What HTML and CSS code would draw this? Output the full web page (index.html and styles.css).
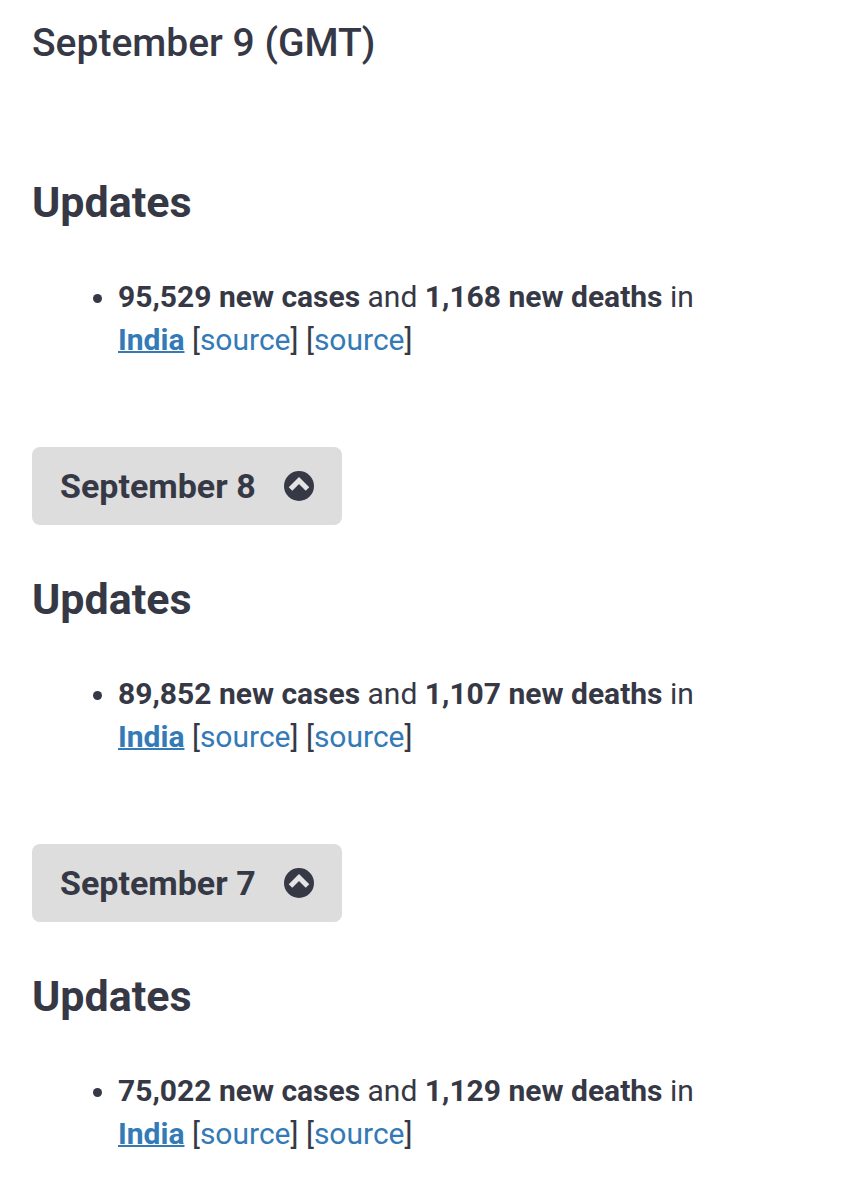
FILE: index.html
```html
<!DOCTYPE html>
<html lang="en">
<head>
<meta charset="utf-8">
<meta name="viewport" content="width=device-width, initial-scale=1">
<title>Updates</title>
<link rel="stylesheet" href="styles.css">
</head>
<body>
<main class="news">
  <section class="day">
    <h3 class="today">September 9 (GMT)</h3>
    <h2 class="heading">Updates</h2>
    <ul class="list">
      <li><strong>95,529 new cases</strong> and <strong>1,168 new deaths</strong> in <a class="country" href="#">India</a> [<a href="#">source</a>] [<a href="#">source</a>]</li>
    </ul>
  </section>
  <section class="day">
    <button class="toggle" type="button" aria-expanded="true">September 8
      <svg class="chevron" viewBox="0 0 30 30" aria-hidden="true"><circle cx="15" cy="15" r="15"/><path d="M6.5 18 15 9.5l8.5 8.5"/></svg>
    </button>
    <h2 class="heading">Updates</h2>
    <ul class="list">
      <li><strong>89,852 new cases</strong> and <strong>1,107 new deaths</strong> in <a class="country" href="#">India</a> [<a href="#">source</a>] [<a href="#">source</a>]</li>
    </ul>
  </section>
  <section class="day">
    <button class="toggle" type="button" aria-expanded="true">September 7
      <svg class="chevron" viewBox="0 0 30 30" aria-hidden="true"><circle cx="15" cy="15" r="15"/><path d="M6.5 18 15 9.5l8.5 8.5"/></svg>
    </button>
    <h2 class="heading">Updates</h2>
    <ul class="list">
      <li><strong>75,022 new cases</strong> and <strong>1,129 new deaths</strong> in <a class="country" href="#">India</a> [<a href="#">source</a>] [<a href="#">source</a>]</li>
    </ul>
  </section>
</main>
</body>
</html>
```
FILE: styles.css
```css
body {
  margin: 0;
  background: #fff;
  color: #363945;
  font-family: Roboto, sans-serif;
  font-size: 30px;
  line-height: 43px;
}

.news {
  padding: 19px 32px 0;
}

.day + .day {
  margin-top: 86px;
}

.today {
  margin: 0 0 111px;
  font-size: 39px;
  font-weight: 500;
  line-height: 48px;
}

.heading {
  margin: 0 0 49px;
  font-size: 43px;
  font-weight: 700;
  line-height: 48px;
}

.list {
  margin: 0;
  padding: 0 100px 0 86px;
}

a {
  color: #337ab7;
  text-decoration: none;
}

strong {
  font-weight: 700;
}

.country {
  font-weight: 700;
  text-decoration: underline;
  text-decoration-thickness: 2px;
}

.toggle {
  display: flex;
  align-items: center;
  gap: 28px;
  margin: 0 0 50px;
  padding: 15px 28px;
  border: 0;
  border-radius: 8px;
  background: #ddd;
  color: inherit;
  font: 700 34px/48px Roboto, sans-serif;
}

.chevron {
  width: 30px;
  height: 30px;
  fill: #363945;
}

.chevron path {
  fill: none;
  stroke: #e4e4e4;
  stroke-width: 5;
}
```
